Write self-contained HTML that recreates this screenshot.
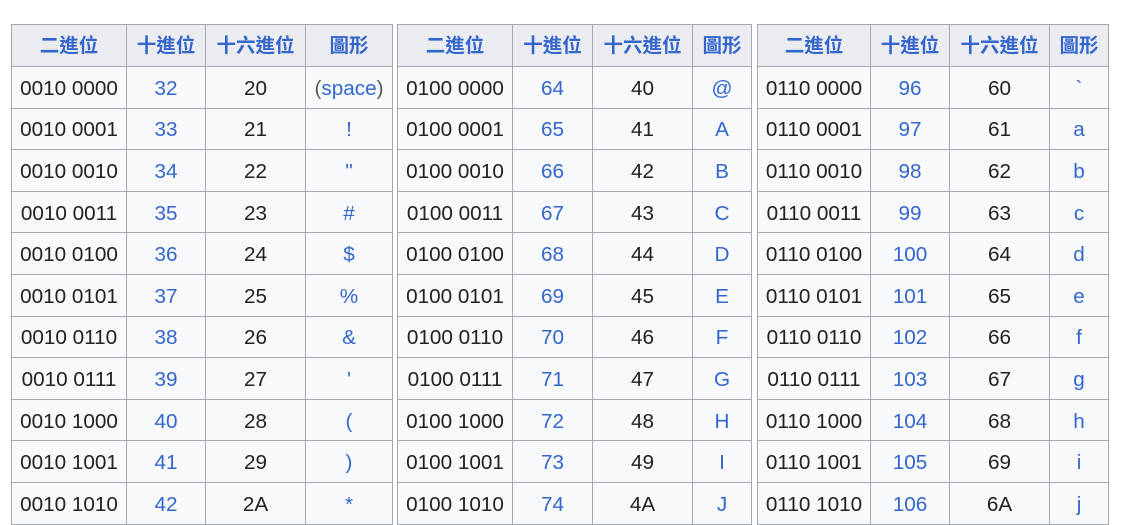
<!DOCTYPE html>
<html><head><meta charset="utf-8"><style>
html,body{margin:0;padding:0;background:#fff;width:1124px;height:488px;overflow:hidden}
table{position:absolute;top:24px;border-collapse:collapse;table-layout:fixed;font-family:"Liberation Sans","Noto Sans CJK TC",sans-serif;font-size:20.7px;color:#202122}
td,th{border:1px solid #a2a9b1;padding:3px 0 0 0;text-align:center;background:#f8f9fa;white-space:nowrap;overflow:hidden;line-height:20px}
th{background:#eaecf0;color:#3366cc;font-weight:bold;height:41px;padding-top:0;font-size:19.5px}
td{height:37.6px}
td.l{color:#3366cc}
</style></head><body>
<table style="left:11px;width:382px"><colgroup><col style="width:115px"><col style="width:79px"><col style="width:100px"><col style="width:87px"></colgroup>
<tr><th>二進位</th><th>十進位</th><th>十六進位</th><th>圖形</th></tr>
<tr><td>0010 0000</td><td class="l">32</td><td>20</td><td class="l"><span style="color:#54595d">(</span>space<span style="color:#54595d">)</span></td></tr>
<tr><td>0010 0001</td><td class="l">33</td><td>21</td><td class="l">!</td></tr>
<tr><td>0010 0010</td><td class="l">34</td><td>22</td><td class="l">"</td></tr>
<tr><td>0010 0011</td><td class="l">35</td><td>23</td><td class="l">#</td></tr>
<tr><td>0010 0100</td><td class="l">36</td><td>24</td><td class="l">$</td></tr>
<tr><td>0010 0101</td><td class="l">37</td><td>25</td><td class="l">%</td></tr>
<tr><td>0010 0110</td><td class="l">38</td><td>26</td><td class="l">&amp;</td></tr>
<tr><td>0010 0111</td><td class="l">39</td><td>27</td><td class="l">'</td></tr>
<tr><td>0010 1000</td><td class="l">40</td><td>28</td><td class="l">(</td></tr>
<tr><td>0010 1001</td><td class="l">41</td><td>29</td><td class="l">)</td></tr>
<tr><td>0010 1010</td><td class="l">42</td><td>2A</td><td class="l">*</td></tr>
</table>
<table style="left:397px;width:355px"><colgroup><col style="width:115px"><col style="width:80px"><col style="width:100px"><col style="width:59px"></colgroup>
<tr><th>二進位</th><th>十進位</th><th>十六進位</th><th>圖形</th></tr>
<tr><td>0100 0000</td><td class="l">64</td><td>40</td><td class="l">@</td></tr>
<tr><td>0100 0001</td><td class="l">65</td><td>41</td><td class="l">A</td></tr>
<tr><td>0100 0010</td><td class="l">66</td><td>42</td><td class="l">B</td></tr>
<tr><td>0100 0011</td><td class="l">67</td><td>43</td><td class="l">C</td></tr>
<tr><td>0100 0100</td><td class="l">68</td><td>44</td><td class="l">D</td></tr>
<tr><td>0100 0101</td><td class="l">69</td><td>45</td><td class="l">E</td></tr>
<tr><td>0100 0110</td><td class="l">70</td><td>46</td><td class="l">F</td></tr>
<tr><td>0100 0111</td><td class="l">71</td><td>47</td><td class="l">G</td></tr>
<tr><td>0100 1000</td><td class="l">72</td><td>48</td><td class="l">H</td></tr>
<tr><td>0100 1001</td><td class="l">73</td><td>49</td><td class="l">I</td></tr>
<tr><td>0100 1010</td><td class="l">74</td><td>4A</td><td class="l">J</td></tr>
</table>
<table style="left:757px;width:352px"><colgroup><col style="width:113px"><col style="width:79px"><col style="width:100px"><col style="width:59px"></colgroup>
<tr><th>二進位</th><th>十進位</th><th>十六進位</th><th>圖形</th></tr>
<tr><td>0110 0000</td><td class="l">96</td><td>60</td><td class="l">`</td></tr>
<tr><td>0110 0001</td><td class="l">97</td><td>61</td><td class="l">a</td></tr>
<tr><td>0110 0010</td><td class="l">98</td><td>62</td><td class="l">b</td></tr>
<tr><td>0110 0011</td><td class="l">99</td><td>63</td><td class="l">c</td></tr>
<tr><td>0110 0100</td><td class="l">100</td><td>64</td><td class="l">d</td></tr>
<tr><td>0110 0101</td><td class="l">101</td><td>65</td><td class="l">e</td></tr>
<tr><td>0110 0110</td><td class="l">102</td><td>66</td><td class="l">f</td></tr>
<tr><td>0110 0111</td><td class="l">103</td><td>67</td><td class="l">g</td></tr>
<tr><td>0110 1000</td><td class="l">104</td><td>68</td><td class="l">h</td></tr>
<tr><td>0110 1001</td><td class="l">105</td><td>69</td><td class="l">i</td></tr>
<tr><td>0110 1010</td><td class="l">106</td><td>6A</td><td class="l">j</td></tr>
</table>
</body></html>
